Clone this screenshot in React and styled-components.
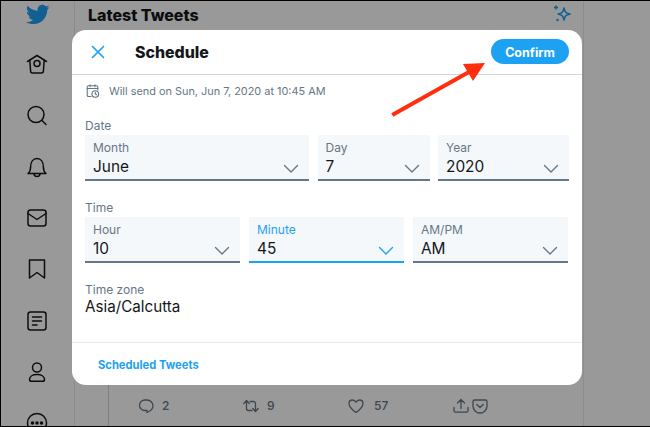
import React from "react";
import styled, { createGlobalStyle } from "styled-components";

const Global = createGlobalStyle`
  html, body { margin: 0; padding: 0; background: #fff; }
  * { box-sizing: border-box; }
  body { font-family: Inter, "Noto Sans", "Liberation Sans", sans-serif; color: #14171a; }
`;

const Page = styled.div`
  position: relative;
  display: flex;
  width: 650px;
  height: 427px;
  overflow: hidden;
  background: #fff;
  border-top: 1px solid #000;
  border-left: 1px solid #000;
  border-bottom: 1px solid #000;
`;

const Scrim = styled.div`
  position: absolute;
  inset: 0;
  background: rgba(0, 0, 0, 0.4);
`;

const Sidebar = styled.nav`
  flex: none;
  width: 74px;
  height: 100%;
  padding-right: 1px;
  display: flex;
  flex-direction: column;
  align-items: center;
  gap: 27.3px;
  border-right: 1px solid #e6ecf0;
  overflow: hidden;
`;

const NavIcon = styled.svg`
  flex: none;
  width: 24px;
  height: 24px;
  fill: none;
  stroke: #14171a;
  stroke-width: 1.5;
  stroke-linecap: round;
  stroke-linejoin: round;
`;

const Bird = styled.svg`
  flex: none;
  width: 25px;
  height: 25px;
  fill: #1da1f2;
  margin-top: 1px;
  margin-bottom: -2px;
`;

const Main = styled.main`
  flex: none;
  width: 509px;
  height: 100%;
  display: flex;
  flex-direction: column;
  border-right: 1px solid #e6ecf0;
`;

const MainHeader = styled.header`
  display: flex;
  align-items: center;
  justify-content: space-between;
  height: 26px;
  padding: 0 10px 0 13px;
`;

const MainTitle = styled.h2`
  margin: 1px 0 0;
  font-size: 16px;
  line-height: 26px;
  font-weight: 800;
`;

const Sparkle = styled.svg`
  width: 22px;
  height: 22px;
  fill: none;
  stroke: #1da1f2;
  stroke-width: 1.5;
  stroke-linejoin: round;
`;

const ThreadRow = styled.div`
  margin-top: auto;
  margin-left: 33px;
  height: 41px;
  border-left: 1px solid #ccd6dd;
  padding-left: 29px;
  display: grid;
  grid-template-columns: repeat(3, 105px) auto;
  align-items: center;
  justify-content: start;
`;

const Action = styled.div`
  display: flex;
  align-items: center;
  gap: ${(p) => p.$gap || 8}px;
  font-size: 12px;
  font-weight: 500;
  color: #657786;
`;

const ActionIcon = styled.svg`
  width: 16px;
  height: 16px;
  fill: none;
  stroke: #657786;
  stroke-width: 1.3;
  stroke-linecap: round;
  stroke-linejoin: round;
`;

const Modal = styled.section`
  position: absolute;
  left: 71px;
  top: 29px;
  width: 510px;
  height: 355px;
  border-radius: 14px;
  background: #fff;
  display: flex;
  flex-direction: column;
  overflow: hidden;
`;

const ModalHeader = styled.header`
  flex: none;
  height: 45px;
  display: flex;
  align-items: center;
  padding: 0 13px 0 19px;
  border-bottom: 1px solid #ccd6dd;
`;

const CloseButton = styled.svg`
  width: 14px;
  height: 14px;
  margin-right: 30px;
  fill: none;
  stroke: #1da1f2;
  stroke-width: 1.7;
  stroke-linecap: round;
`;

const ModalTitle = styled.h1`
  margin: 0;
  font-size: 15.9px;
  font-weight: 800;
  color: #14171a;
`;

const Confirm = styled.button`
  margin-left: auto;
  width: 78px;
  height: 25px;
  margin-top: -1px;
  border: 0;
  border-radius: 13px;
  background: #1da1f2;
  color: #fff;
  font: 700 12.5px Inter, sans-serif;
  padding: 1px 0 0;
`;

const Body = styled.div`
  flex: 1;
  padding: 0 13px;
  display: flex;
  flex-direction: column;
  gap: 17px;
`;

const Info = styled.div`
  height: 32px;
  margin-bottom: -8px;
  display: flex;
  align-items: center;
  gap: 9px;
  padding-left: 1px;
  font-size: 10.9px;
  color: #657786;
`;

const InfoIcon = styled.svg`
  width: 14px;
  height: 14px;
  fill: none;
  stroke: #657786;
  stroke-width: 1.1;
  stroke-linecap: round;
  stroke-linejoin: round;
`;

const Group = styled.div`
  display: flex;
  flex-direction: column;
`;

const GroupLabel = styled.div`
  height: 18px;
  margin-bottom: 1px;
  font-size: 12px;
  line-height: 20px;
  color: #657786;
`;

const Fields = styled.div`
  display: grid;
  grid-template-columns: ${(p) => p.$cols};
  column-gap: ${(p) => p.$gap}px;
`;

const Field = styled.div`
  position: relative;
  height: 46px;
  padding: 4px 8px 0;
  background: #f5f8fa;
  border-bottom: 2px solid ${(p) => (p.$active ? "#1da1f2" : "#657786")};
`;

const FieldLabel = styled.div`
  font-size: 12px;
  line-height: 17px;
  color: ${(p) => (p.$active ? "#1da1f2" : "#657786")};
`;

const FieldValue = styled.div`
  margin-top: 1px;
  font-size: 15.4px;
  line-height: 20px;
  color: #14171a;
`;

const Chevron = styled.svg`
  position: absolute;
  right: 10px;
  bottom: 5px;
  width: 16px;
  height: 10px;
  fill: none;
  stroke: ${(p) => (p.$active ? "#1da1f2" : "#657786")};
  stroke-width: 1.4;
  stroke-linecap: round;
  stroke-linejoin: round;
`;

const ZoneValue = styled.div`
  font-size: 15.2px;
  line-height: 18px;
  color: #14171a;
`;

const ZoneLabel = styled(GroupLabel)`
  margin-bottom: 0;
`;

const ModalFooter = styled.footer`
  flex: none;
  height: 43px;
  display: flex;
  align-items: center;
  padding: 2px 0 0 26px;
  border-top: 1px solid #e6ecf0;
  font-size: 11.2px;
  font-weight: 700;
  color: #1da1f2;
`;

const Arrow = styled.svg`
  position: absolute;
  left: 384px;
  top: 54px;
  width: 106px;
  height: 66px;
`;

const Caret = ({ active }) => (
  <Chevron viewBox="0 0 16 10" $active={active}>
    <path d="M1.5 1.5 8 8l6.5-6.5" />
  </Chevron>
);

const SelectField = ({ label, value, active }) => (
  <Field $active={active}>
    <FieldLabel $active={active}>{label}</FieldLabel>
    <FieldValue>{value}</FieldValue>
    <Caret active={active} />
  </Field>
);

export default function App() {
  return (
    <Page>
      <Global />
      <Sidebar>
        <Bird viewBox="0 0 24 24">
          <path d="M23.643 4.937c-.835.37-1.732.62-2.675.733.962-.576 1.7-1.49 2.048-2.578-.9.534-1.897.922-2.958 1.13-.85-.904-2.06-1.47-3.4-1.47-2.572 0-4.658 2.086-4.658 4.66 0 .364.042.718.12 1.06-3.873-.195-7.304-2.05-9.602-4.868-.4.69-.63 1.49-.63 2.342 0 1.616.823 3.043 2.072 3.878-.764-.025-1.482-.234-2.11-.583v.06c0 2.257 1.605 4.14 3.737 4.568-.392.106-.803.162-1.227.162-.3 0-.593-.028-.877-.082.593 1.85 2.313 3.198 4.352 3.234-1.595 1.25-3.604 1.995-5.786 1.995-.376 0-.747-.022-1.112-.065 2.062 1.323 4.51 2.093 7.14 2.093 8.57 0 13.255-7.098 13.255-13.254 0-.2-.005-.402-.014-.602.91-.658 1.7-1.477 2.323-2.41z" />
        </Bird>
        <NavIcon viewBox="0 0 24 24">
          <path d="M2.500 9.500 12 3.500l9.500 6" />
          <path d="M4.800 8.200 5.600 19a2 2 0 0 0 2 2h8.800a2 2 0 0 0 2-2l.8-10.800" />
          <circle cx="12" cy="11.500" r="3" />
        </NavIcon>
        <NavIcon viewBox="0 0 24 24">
          <circle cx="11" cy="10.500" r="8" />
          <path d="m17 16.500 4 4" />
        </NavIcon>
        <NavIcon viewBox="0 0 24 24">
          <path d="M3 18.500c2-1.500 2.600-3 2.600-6.500C5.600 7 8 3.500 12 3.500S18.400 7 18.400 12c0 3.500.6 5 2.600 6.500z" />
          <path d="M9 18.500a3 3 0 0 0 6 0" />
        </NavIcon>
        <NavIcon viewBox="0 0 24 24">
          <rect x="3" y="4" width="18" height="16" rx="2.500" />
          <path d="m3 7.500 9 6 9-6" />
        </NavIcon>
        <NavIcon viewBox="0 0 24 24">
          <path d="M4.500 3h15v18L12 15.500 4.500 21z" />
        </NavIcon>
        <NavIcon viewBox="0 0 24 24">
          <rect x="3" y="3" width="18" height="18" rx="2.500" />
          <path d="M7.500 8h9M7.500 12h9M7.500 16h4.500" />
        </NavIcon>
        <NavIcon viewBox="0 0 24 24">
          <circle cx="12" cy="7.500" r="4.500" />
          <path d="M4.500 19.500c0-3 3.300-5 7.500-5s7.500 2 7.500 5c0 1.200-.8 1.800-2 1.800h-11c-1.200 0-2-.6-2-1.800z" />
        </NavIcon>
        <NavIcon viewBox="0 0 24 24">
          <circle cx="12" cy="12" r="9.500" />
          <circle cx="7.500" cy="12" r="1" fill="#14171a" />
          <circle cx="12" cy="12" r="1" fill="#14171a" />
          <circle cx="16.500" cy="12" r="1" fill="#14171a" />
        </NavIcon>
      </Sidebar>
      <Main>
        <MainHeader>
          <MainTitle>Latest Tweets</MainTitle>
          <Sparkle viewBox="0 0 22 22">
            <path d="M13 5c.8 4 2 5.200 6 6-4 .8-5.200 2-6 6-.8-4-2-5.200-6-6 4-.8 5.200-2 6-6z" />
            <path d="M5 2.500v4M3 4.500h4" />
            <circle cx="6.500" cy="17" r="1.200" fill="#1da1f2" stroke="none" />
          </Sparkle>
        </MainHeader>
        <ThreadRow>
          <Action>
            <ActionIcon viewBox="0 0 16 16">
              <path d="M7 2h2a6 6 0 0 1 6 6c0 2.800-2.500 5-6 6.500V12.500H7A5.300 5.300 0 0 1 1.500 7.300 5.300 5.300 0 0 1 7 2z" />
            </ActionIcon>
            2
          </Action>
          <Action>
            <ActionIcon viewBox="0 0 16 16">
              <path d="M.8 5.500 3.500 2.500l2.700 3M3.500 3v7.500a2 2 0 0 0 2 2h3.500M15.200 10.500l-2.700 3-2.700-3M12.500 13V5.500a2 2 0 0 0-2-2H7" />
            </ActionIcon>
            9
          </Action>
          <Action $gap={10}>
            <ActionIcon viewBox="0 0 16 16">
              <path d="M8 14.500C3 11 1 8.500 1 5.500 1 3.300 2.700 2 4.500 2 6 2 7.300 3 8 4.300 8.700 3 10 2 11.500 2 13.300 2 15 3.300 15 5.500c0 3-2 5.500-7 9z" />
            </ActionIcon>
            57
          </Action>
          <Action $gap={3}>
            <ActionIcon viewBox="0 0 16 16">
              <path d="M8 10.500V1.500M4.500 5 8 1.500 11.500 5M1 9.500v3.300c0 .9.700 1.400 1.400 1.400h11.200c.7 0 1.400-.5 1.400-1.400V9.500" />
            </ActionIcon>
            <ActionIcon viewBox="0 0 16 16">
              <path d="M2.500 2h11A1.500 1.500 0 0 1 15 3.500V8a7 7 0 0 1-14 0V3.500A1.500 1.500 0 0 1 2.500 2z" />
              <path d="m4.800 6.500 3.200 3 3.200-3" />
            </ActionIcon>
          </Action>
        </ThreadRow>
      </Main>
      <Scrim />
      <Modal>
        <ModalHeader>
          <CloseButton viewBox="0 0 14 14">
            <path d="m1.500 1.500 11 11M12.500 1.500l-11 11" />
          </CloseButton>
          <ModalTitle>Schedule</ModalTitle>
          <Confirm>Confirm</Confirm>
        </ModalHeader>
        <Body>
          <Info>
            <InfoIcon viewBox="0 0 14 14">
              <path d="M5 12.500H2.500a1.300 1.300 0 0 1-1.300-1.300V3a1.300 1.300 0 0 1 1.300-1.300h8A1.300 1.300 0 0 1 11.800 3v3" />
              <path d="M1.200 4.500h10.600M4 .7v2M9 .7v2" />
              <circle cx="9.300" cy="10" r="3.300" />
              <path d="M9.300 8.300V10l1.200.8" />
            </InfoIcon>
            Will send on Sun, Jun 7, 2020 at 10:45 AM
          </Info>
          <Group>
            <GroupLabel>Date</GroupLabel>
            <Fields $cols="224px 112px 131px" $gap={8.5}>
              <SelectField label="Month" value="June" />
              <SelectField label="Day" value="7" />
              <SelectField label="Year" value="2020" />
            </Fields>
          </Group>
          <Group>
            <GroupLabel>Time</GroupLabel>
            <Fields $cols="repeat(3, 155px)" $gap={9}>
              <SelectField label="Hour" value="10" />
              <SelectField label="Minute" value="45" active />
              <SelectField label="AM/PM" value="AM" />
            </Fields>
          </Group>
          <Group>
            <ZoneLabel>Time zone</ZoneLabel>
            <ZoneValue>Asia/Calcutta</ZoneValue>
          </Group>
        </Body>
        <ModalFooter>Scheduled Tweets</ModalFooter>
      </Modal>
      <Arrow viewBox="0 0 106 66">
        <path d="M9 59 84 17" stroke="#ff2e0c" strokeWidth="4" strokeLinecap="square" />
        <path d="M100 8 78 9 88 26z" fill="#ff2e0c" />
      </Arrow>
    </Page>
  );
}
